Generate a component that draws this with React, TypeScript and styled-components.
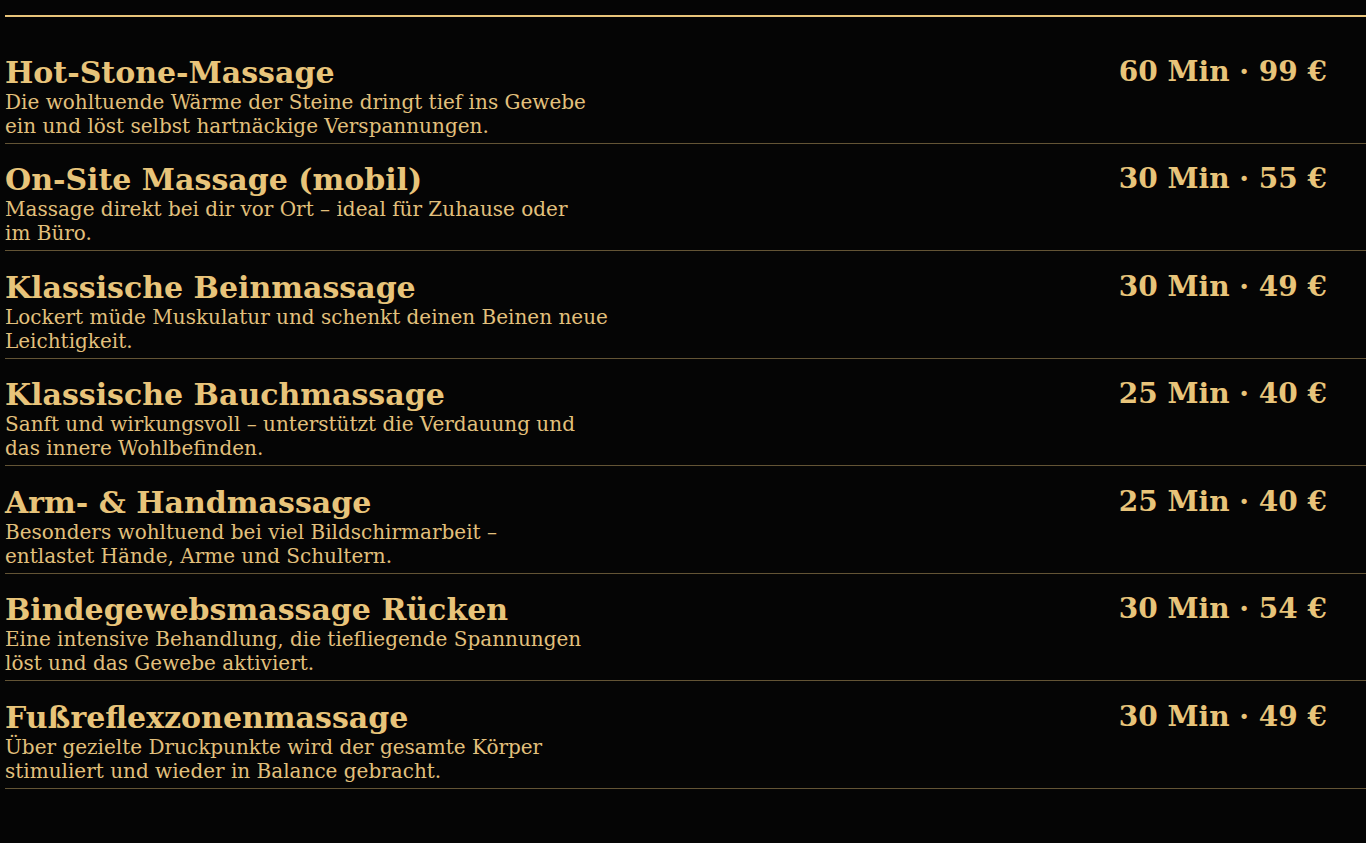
import React from "react";
import styled, { createGlobalStyle } from "styled-components";

const Global = createGlobalStyle`
  html, body {
    margin: 0;
    padding: 0;
    background: #050505;
  }
  body {
    font-family: "DejaVu Serif", serif;
  }
`;

const Page = styled.main`
  min-height: 843px;
  background: #050505;
  padding: 15px 0 0 5px;
  box-sizing: border-box;
`;

const List = styled.section`
  border-top: 2px solid #e8c47a;
  padding-top: 19px;
`;

const Row = styled.article`
  display: flex;
  justify-content: space-between;
  align-items: flex-start;
  padding: 18.5px 0 5px;
  border-bottom: 1px solid rgba(232, 196, 122, 0.42);
`;

const Info = styled.div`
  display: flex;
  flex-direction: column;
  max-width: 640px;
`;

const Title = styled.h3`
  margin: 0;
  font-family: "DejaVu Serif", serif;
  font-weight: 700;
  font-size: 30px;
  line-height: normal;
  color: #e8c47a;
`;

const Desc = styled.p`
  margin: 0;
  font-family: "DejaVu Serif", serif;
  font-size: 20px;
  line-height: 24px;
  color: #e2c07c;
`;

const DescLine = styled.span`
  display: block;
  white-space: nowrap;
`;

const Price = styled.div`
  font-family: "DejaVu Serif", serif;
  font-weight: 700;
  font-size: 28px;
  line-height: normal;
  color: #e8c47a;
  margin-right: 39px;
  white-space: nowrap;
`;

const items = [
  {
    title: "Hot-Stone-Massage",
    desc: ["Die wohltuende Wärme der Steine dringt tief ins Gewebe", "ein und löst selbst hartnäckige Verspannungen."],
    price: "60 Min · 99 €",
  },
  {
    title: "On-Site Massage (mobil)",
    desc: ["Massage direkt bei dir vor Ort – ideal für Zuhause oder", "im Büro."],
    price: "30 Min · 55 €",
  },
  {
    title: "Klassische Beinmassage",
    desc: ["Lockert müde Muskulatur und schenkt deinen Beinen neue", "Leichtigkeit."],
    price: "30 Min · 49 €",
  },
  {
    title: "Klassische Bauchmassage",
    desc: ["Sanft und wirkungsvoll – unterstützt die Verdauung und", "das innere Wohlbefinden."],
    price: "25 Min · 40 €",
  },
  {
    title: "Arm- & Handmassage",
    desc: ["Besonders wohltuend bei viel Bildschirmarbeit –", "entlastet Hände, Arme und Schultern."],
    price: "25 Min · 40 €",
  },
  {
    title: "Bindegewebsmassage Rücken",
    desc: ["Eine intensive Behandlung, die tiefliegende Spannungen", "löst und das Gewebe aktiviert."],
    price: "30 Min · 54 €",
  },
  {
    title: "Fußreflexzonenmassage",
    desc: ["Über gezielte Druckpunkte wird der gesamte Körper", "stimuliert und wieder in Balance gebracht."],
    price: "30 Min · 49 €",
  },
];

export default function App() {
  return (
    <>
      <Global />
      <Page>
        <List>
          {items.map((it) => (
            <Row key={it.title}>
              <Info>
                <Title>{it.title}</Title>
                <Desc>
                  {it.desc.map((line) => (
                    <DescLine key={line}>{line}</DescLine>
                  ))}
                </Desc>
              </Info>
              <Price>{it.price}</Price>
            </Row>
          ))}
        </List>
      </Page>
    </>
  );
}
